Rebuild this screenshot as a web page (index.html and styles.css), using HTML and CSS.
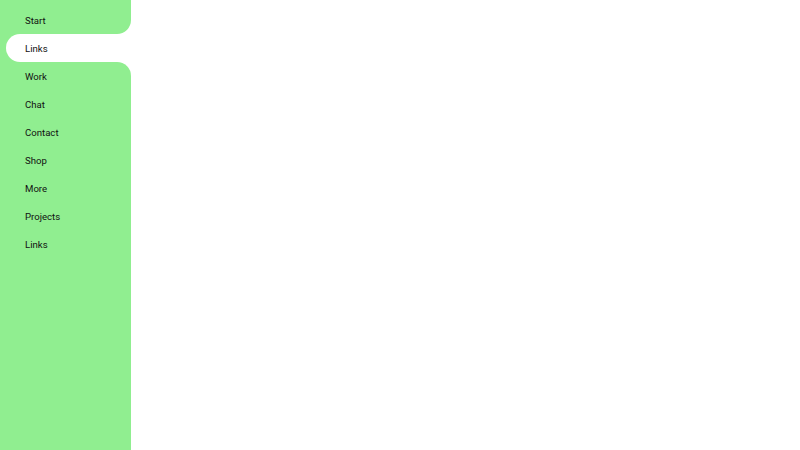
FILE: index.html
```html
<!DOCTYPE html>
<html lang="en">
<head>
<meta charset="utf-8">
<title>Sidebar</title>
<link rel="stylesheet" href="styles.css">
</head>
<body>
<div class="layout">
  <nav class="sidebar">
    <ul class="menu">
      <li class="item item-above"><a class="link" href="#">Start</a></li>
      <li class="item item-active"><a class="link" href="#">Links</a></li>
      <li class="item item-below"><a class="link" href="#">Work</a></li>
      <li class="item"><a class="link" href="#">Chat</a></li>
      <li class="item"><a class="link" href="#">Contact</a></li>
      <li class="item"><a class="link" href="#">Shop</a></li>
      <li class="item"><a class="link" href="#">More</a></li>
      <li class="item"><a class="link" href="#">Projects</a></li>
      <li class="item"><a class="link" href="#">Links</a></li>
    </ul>
  </nav>
  <main class="content"></main>
</div>
</body>
</html>
```
FILE: styles.css
```css
html, body {
  margin: 0;
  padding: 0;
  height: 100%;
  background: #ffffff;
  font-family: Roboto, "Liberation Sans", sans-serif;
}
.layout {
  display: flex;
  height: 100%;
}
.sidebar {
  width: 131px;
  flex: none;
  background: #90ee90;
  padding-top: 6px;
  box-sizing: border-box;
}
.content {
  flex: 1;
  background: #ffffff;
}
.menu {
  list-style: none;
  margin: 0;
  padding: 0;
}
.item {
  display: block;
}
.link {
  display: block;
  height: 27px;
  padding-top: 1px;
  line-height: 28px;
  padding-left: 25px;
  font-size: 9.6px;
  color: #111;
  text-decoration: none;
  overflow: hidden;
}
.item-above,
.item-below {
  background: #ffffff;
}
.item-above .link {
  background: #90ee90;
  border-bottom-right-radius: 14px;
}
.item-below .link {
  background: #90ee90;
  border-top-right-radius: 14px;
}
.item-active {
  margin-left: 6px;
  background: #ffffff;
  border-radius: 14px 0 0 14px;
}
.item-active .link {
  padding-left: 19px;
}
```
